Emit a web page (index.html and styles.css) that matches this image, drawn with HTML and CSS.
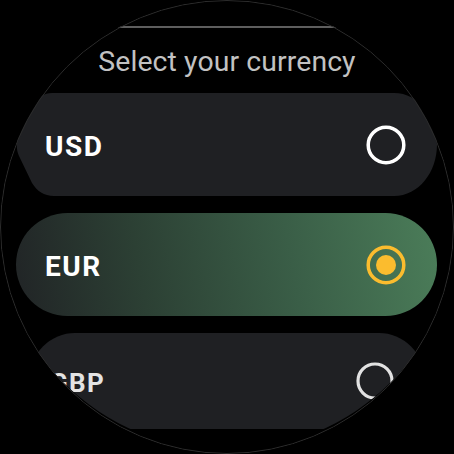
FILE: index.html
```html
<!DOCTYPE html>
<html>
<head>
<meta charset="utf-8">
<link rel="stylesheet" href="styles.css">
</head>
<body>
<div class="watch">
  <div class="column">
    <div class="topline"></div>
    <div class="title">Select your currency</div>
    <div class="card card-morph">
      <span class="label">USD</span>
      <svg class="radio" width="40" height="40" viewBox="0 0 40 40"><circle cx="20" cy="20" r="17.8" fill="none" stroke="#ffffff" stroke-width="3.5"/></svg>
    </div>
    <div class="card card-selected">
      <span class="label">EUR</span>
      <svg class="radio" width="40" height="40" viewBox="0 0 40 40"><circle cx="20" cy="20" r="17.8" fill="none" stroke="#fbbc2e" stroke-width="3.5"/><circle cx="20" cy="20" r="10" fill="#fbbc2e"/></svg>
    </div>
    <div class="card card-edge">
      <span class="label label-small">GBP</span>
      <svg class="radio" width="38" height="38" viewBox="0 0 38 38"><circle cx="19" cy="19" r="17" fill="none" stroke="#e2e2e2" stroke-width="3.2"/></svg>
    </div>
  </div>
</div>
</body>
</html>
```

FILE: styles.css
```css
html, body {
  margin: 0;
  padding: 0;
  background: #000;
}
body {
  width: 454px;
  height: 454px;
  overflow: hidden;
  font-family: Roboto, "Liberation Sans", sans-serif;
}
.watch {
  position: relative;
  width: 454px;
  height: 454px;
  border-radius: 50%;
  overflow: hidden;
  background: #000;
}
.watch::after {
  content: "";
  position: absolute;
  inset: 0;
  border-radius: 50%;
  border: 1px solid #2c2c2c;
  pointer-events: none;
}
.column {
  display: flex;
  flex-direction: column;
  padding-top: 26px;
}
.topline {
  height: 2px;
  background: #5e5e5e;
}
.title {
  margin-top: 18px;
  height: 32px;
  line-height: 32px;
  font-size: 28.4px;
  letter-spacing: 0.1px;
  color: #c2c2c2;
  text-align: center;
}
.card {
  height: 103px;
  margin: 0 17px 0 16px;
  box-sizing: border-box;
  padding: 0 31px 0 29px;
  display: flex;
  align-items: center;
  justify-content: space-between;
  background: #1f2023;
  border-radius: 51.5px;
}
.title + .card {
  margin-top: 15px;
}
.card + .card {
  margin-top: 17px;
}
.card-morph {
  border-radius: 0;
  clip-path: path("M 36 0 H 378 C 403 0 421 24 421 51.5 C 421 79 403 103 378 103 H 38 C 28 103 21 98 16 90 L 3 63 C 0 57 0 47 3 41 L 17 12 C 22 4 28 0 36 0 Z");
}
.card-selected {
  background: linear-gradient(80deg, #212426 0%, #2c4034 30%, #3a5e47 65%, #4b7d59 100%);
}
.card-edge {
  height: 96px;
  margin: 17px 30px 0 30px;
  padding: 0 30px 0 20px;
  border-radius: 45px;
  clip-path: circle(232px at 197px -115px);
}
.label {
  font-size: 28px;
  font-weight: 700;
  line-height: 28px;
  letter-spacing: 1.5px;
  padding-top: 4px;
  color: #ffffff;
}
.label-small {
  font-size: 26px;
  line-height: 26px;
  letter-spacing: 1.3px;
  padding-top: 3px;
  color: #e4e4e4;
}
.radio {
  display: block;
  flex: none;
}
```
